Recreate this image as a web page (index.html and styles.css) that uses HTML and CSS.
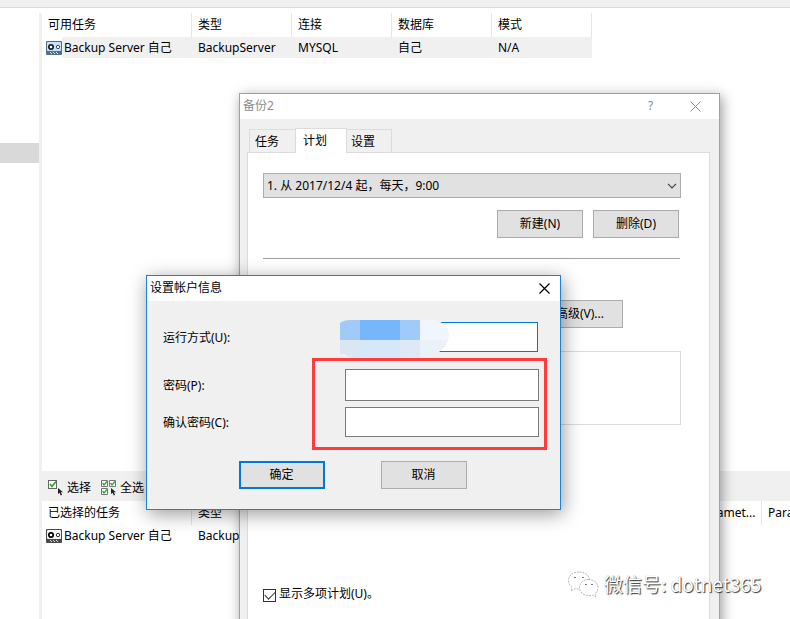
FILE: index.html
```html
<!DOCTYPE html>
<html lang="zh-CN">
<head>
  <meta charset="UTF-8">
  <meta name="viewport" content="width=device-width, initial-scale=1.0">
  <title>备份2 - 设置帐户信息</title>
  <link rel="stylesheet" href="styles.css">
</head>
<body>

  <!-- Main window -->
  <div class="app">
    <div class="topbar"></div>
    <div class="workspace">
      <aside class="sidebar">
        <div class="sidebar-selected"></div>
      </aside>
      <main class="content">
        <section class="available">
          <table class="list">
            <colgroup>
              <col class="col-name"><col class="col"><col class="col"><col class="col"><col class="col">
            </colgroup>
            <thead>
              <tr><th>可用任务</th><th>类型</th><th>连接</th><th>数据库</th><th>模式</th></tr>
            </thead>
            <tbody>
              <tr class="selected">
                <td class="name-cell">
                  <svg class="tape" viewBox="0 0 16 14" width="16" height="14">
                    <rect width="16" height="14" rx="1" fill="#4f6f8f"/>
                    <rect x="1" y="1" width="14" height="9" rx="1" fill="#c9e2fa"/>
                    <circle cx="5" cy="6" r="2.2" fill="#fff" stroke="#14222e" stroke-width="1.7"/>
                    <circle cx="12" cy="6" r="1.7" fill="#fff" stroke="#34536f"/>
                    <path d="M4 11.5h1M7 11.5h1M10 11.5h1M5 12.5h1M8 12.5h1M11 12.5h1" stroke="#dfe8f0"/>
                  </svg>
                  <span>Backup Server 自己</span>
                </td>
                <td>BackupServer</td><td>MYSQL</td><td>自己</td><td>N/A</td>
              </tr>
            </tbody>
          </table>
        </section>

        <div class="toolbar">
          <button class="tool" type="button">
            <svg viewBox="0 0 16 16" width="16" height="16">
              <rect x="0.5" y="0.5" width="8" height="8" fill="#fff" stroke="#666"/>
              <path d="M2 4l2 2.5L8 1.5" fill="none" stroke="#2ea42e" stroke-width="1.7"/>
              <path d="M10 8v6l1.5-1.3 1.3 2.8 1.3-.7-1.3-2.6H15z" fill="#222"/>
            </svg>
            选择
          </button>
          <button class="tool" type="button">
            <svg viewBox="0 0 16 16" width="16" height="16">
              <path d="M.5.5h6v6h-6zM8.5.5h6v6h-6zM.5 8.5h6v6h-6z" fill="#fff" stroke="#777"/>
              <path d="M1.5 3L3 5l3-3.500M9.500 3L11 5l3-3.500M1.500 11L3 13l3-3.500" fill="none" stroke="#2ea42e" stroke-width="1.3"/>
              <path d="M10 8v6l1.5-1.3 1.3 2.8 1.3-.7-1.3-2.6H15z" fill="#222"/>
            </svg>
            全选
          </button>
        </div>

        <section class="chosen">
          <table class="list">
            <colgroup>
              <col class="col-name"><col class="col"><col class="col"><col class="col"><col class="col"><col class="col"><col class="col-short"><col class="col">
            </colgroup>
            <thead>
              <tr><th>已选择的任务</th><th>类型</th><th></th><th></th><th></th><th></th><th>Paramet...</th><th>Para</th></tr>
            </thead>
            <tbody>
              <tr>
                <td class="name-cell">
                  <svg class="tape" viewBox="0 0 16 14" width="16" height="14">
                    <rect width="16" height="14" rx="1" fill="#4a4a4a"/>
                    <rect x="1" y="1" width="14" height="9" rx="1" fill="#f4f4f4"/>
                    <circle cx="5" cy="6" r="2.2" fill="#fff" stroke="#000" stroke-width="1.7"/>
                    <circle cx="12" cy="6" r="1.7" fill="#fff" stroke="#333"/>
                    <path d="M4 11.5h1M7 11.5h1M10 11.5h1M5 12.5h1M8 12.5h1M11 12.5h1" stroke="#ddd"/>
                  </svg>
                  <span>Backup Server 自己</span>
                </td>
                <td>Backup</td><td></td><td></td><td></td><td></td><td></td><td></td>
              </tr>
            </tbody>
          </table>
        </section>
      </main>
    </div>
  </div>

  <!-- Backup job window -->
  <div class="window job-window">
    <div class="titlebar">
      <span class="title">备份2</span>
      <button class="title-button" type="button" aria-label="帮助">?</button>
      <button class="title-button" type="button" aria-label="关闭">
        <svg viewBox="0 0 11 11" width="11" height="11"><path d="M.5.5l10 10M10.5.5l-10 10" stroke="currentColor"/></svg>
      </button>
    </div>
    <div class="job-body">
      <div class="tabs" role="tablist">
        <button class="tab" type="button" role="tab">任务</button>
        <button class="tab active" type="button" role="tab" aria-selected="true">计划</button>
        <button class="tab" type="button" role="tab">设置</button>
      </div>
      <div class="panel" role="tabpanel">
        <div class="schedule">
          <select aria-label="计划">
            <option>1. 从 2017/12/4 起，每天，9:00</option>
          </select>
          <svg viewBox="0 0 10 6" width="10" height="6"><path d="M1 .8l4 4 4-4" fill="none" stroke="#444" stroke-width="1.2"/></svg>
        </div>
        <div class="schedule-actions">
          <button class="btn" type="button">新建(N)</button>
          <button class="btn" type="button">删除(D)</button>
        </div>
        <hr>
        <div class="advanced">
          <button class="btn" type="button">高级(V)...</button>
        </div>
        <div class="summary"></div>
        <label class="check">
          <input type="checkbox" checked>
          显示多项计划(U)。
        </label>
      </div>
    </div>
  </div>

  <!-- Account dialog -->
  <form class="window account-window">
    <div class="titlebar">
      <span class="title">设置帐户信息</span>
      <button class="title-button" type="button" aria-label="关闭">
        <svg viewBox="0 0 11 11" width="11" height="11"><path d="M.5.5l10 10M10.5.5l-10 10" stroke="currentColor" stroke-width="1.2"/></svg>
      </button>
    </div>
    <div class="fields">
      <div class="field">
        <label for="run-as">运行方式(U):</label>
        <div class="run-as">
          <input class="focused" id="run-as" type="text">
          <svg class="mosaic" viewBox="0 0 109 38" width="109" height="38">
            <clipPath id="smudge"><path d="M0 3Q4 0 10 0H96Q109 5 109 15Q108 26 99 32Q88 38 70 38H12Q8 38 5 34H0z"/></clipPath>
            <g clip-path="url(#smudge)" shape-rendering="crispEdges">
              <rect width="20" height="20" fill="#a1cbf6"/>
              <rect x="20" width="40" height="20" fill="#76b7fb"/>
              <rect x="60" width="20" height="20" fill="#a0cafa"/>
              <rect x="80" width="29" height="20" fill="#f0f5fe"/>
              <rect y="20" width="20" height="18" fill="#dae7f3"/>
              <rect x="20" y="20" width="40" height="18" fill="#d6e7f7"/>
              <rect x="60" y="20" width="20" height="18" fill="#dfe9f6"/>
              <rect x="80" y="20" width="29" height="18" fill="#ebf1f9"/>
            </g>
          </svg>
        </div>
      </div>
      <div class="passwords">
        <div class="field">
          <label for="password">密码(P):</label>
          <input id="password" type="password">
        </div>
        <div class="field">
          <label for="confirm">确认密码(C):</label>
          <input id="confirm" type="password">
        </div>
        <div class="highlight"></div>
      </div>
    </div>
    <div class="dialog-actions">
      <button class="btn default" type="submit">确定</button>
      <button class="btn" type="button">取消</button>
    </div>
  </form>

  <div class="watermark">
    <svg viewBox="0 0 32 28" width="32" height="28">
      <g fill="#fff" stroke="#999" stroke-width="0.7" stroke-dasharray="2 1">
        <path d="M12 2C6 2 1.500 5.500 1.500 10.500c0 3 1.500 5 3.500 6.500l-1 4 4.500-2.500c1.200.4 2.300.5 3.500.5 6 0 10.500-3.500 10.500-8.500S18 2 12 2z"/>
        <path d="M21.500 9.500C16.500 9.500 12.500 13 12.500 17.500s4 8 9 8c1.300 0 2.500-.2 3.500-.5l4 2-1-3.500c2-1.500 3-3.500 3-6 0-4.500-4-8-9.500-8z"/>
      </g>
      <path d="M7 7.500h2M15 7.500h2M18 14.500h2M24 14.500h2" stroke="#777" stroke-width="1.2"/>
    </svg>
    <span>微信号: dotnet365</span>
  </div>

</body>
</html>
```
FILE: styles.css
```css
* {
  box-sizing: border-box;
}

body {
  margin: 0;
  height: 100vh;
  overflow: hidden;
  position: relative;
  background: #fff;
  color: #000;
  font-family: "Noto Sans", "Noto Sans CJK SC", sans-serif;
  font-size: 12px;
  line-height: 16px;
}

button,
input,
select {
  font: inherit;
  color: inherit;
}

svg {
  display: block;
  flex: none;
}

/* Main window */
.app {
  height: 100%;
  display: flex;
  flex-direction: column;
}

.topbar {
  height: 8px;
  background: #f0f0f0;
  border-bottom: 1px solid #dadada;
}

.workspace {
  flex: 1;
  display: flex;
  margin-top: 5px;
  min-height: 0;
}

.sidebar {
  width: 42px;
  flex: none;
  border-right: 3px solid #f0f0f0;
  padding-top: 130px;
}

.sidebar-selected {
  height: 20px;
  background: #d9d9d9;
}

.content {
  flex: 1;
  min-width: 0;
  display: flex;
  flex-direction: column;
}

.available {
  flex: 1;
}

.chosen {
  height: 118px;
  overflow: hidden;
}

.list {
  table-layout: fixed;
  border-collapse: separate;
  border-spacing: 0;
  width: 0;
  white-space: nowrap;
}

.col-name {
  width: 150px;
}

.col {
  width: 100px;
}

.col-short {
  width: 70px;
}

.list th {
  height: 24px;
  padding: 0 0 0 6px;
  border-right: 1px solid #e5e5e5;
  font-weight: normal;
  text-align: left;
}

.list td {
  height: 21px;
  padding: 0 0 0 6px;
}

.list .name-cell {
  display: flex;
  align-items: center;
  padding-left: 4px;
}

.name-cell span {
  flex: 1;
  padding-left: 2px;
  line-height: 21px;
}

.selected td,
.selected .name-cell span {
  background: #f0f0f0;
}

.selected .name-cell {
  background: none;
}

.toolbar {
  height: 30px;
  display: flex;
  align-items: center;
  gap: 10px;
  padding: 3px 0 0 6px;
  background: #f0f0f0;
}

.tool {
  display: flex;
  align-items: center;
  gap: 3px;
  padding: 0;
  border: 0;
  background: none;
}

/* Windows */
.window {
  position: absolute;
  display: flex;
  flex-direction: column;
  background: #f0f0f0;
}

.titlebar {
  height: 25px;
  flex: none;
  display: flex;
  align-items: center;
  padding: 0 1px 1px 3px;
  background: #fff;
}

.title {
  flex: 1;
}

.title-button {
  width: 45px;
  height: 24px;
  display: flex;
  align-items: center;
  justify-content: center;
  padding: 0;
  border: 0;
  background: none;
}

.btn {
  width: 86px;
  height: 28px;
  padding: 0;
  border: 1px solid #adadad;
  background: #e1e1e1;
}

.btn.default {
  border: 2px solid #0078d7;
}

.job-window {
  left: 239px;
  top: 93px;
  bottom: -20px;
  width: 481px;
  border: 1px solid #a0a0a0;
  box-shadow: 2px 3px 12px rgba(0, 0, 0, 0.4);
}

.job-window .titlebar {
  color: #8c8c8c;
}

.job-body {
  flex: 1;
  display: flex;
  flex-direction: column;
  padding: 9px 9px 0 7px;
}

.tabs {
  display: flex;
  align-items: flex-end;
  padding-left: 2px;
}

.tab {
  height: 23px;
  padding: 1px 16px 0 5px;
  border: 1px solid #dcdcdc;
  border-bottom: 0;
  background: #f0f0f0;
  text-align: left;
}

.tab + .tab {
  margin-left: -1px;
}

.tab:last-child {
  padding-left: 4px;
}

.tab.active {
  position: relative;
  z-index: 1;
  height: 25px;
  margin-bottom: -1px;
  padding: 0 19px 1px 7px;
  background: #fff;
}

.panel {
  flex: 1;
  padding: 20px 28px 0 15px;
  border: 1px solid #dcdcdc;
  background: #fff;
}

.schedule {
  display: grid;
  align-items: center;
}

.schedule select,
.schedule svg {
  grid-area: 1 / 1;
}

.schedule select {
  appearance: none;
  width: 100%;
  height: 25px;
  padding: 0 24px 0 3px;
  border: 1px solid #adadad;
  border-radius: 0;
  background: #e1e1e1;
}

.schedule svg {
  justify-self: end;
  margin-right: 4px;
  pointer-events: none;
}

.schedule-actions {
  display: flex;
  justify-content: flex-end;
  gap: 10px;
  margin: 12px 2px 20px 0;
}

hr {
  margin: 0 1px 0 0;
  border: 0;
  border-top: 1px solid #a0a0a0;
}

.advanced {
  display: flex;
  justify-content: flex-end;
  margin: 41px 58px 23px 0;
}

.summary {
  height: 74px;
  border: 1px solid #dcdcdc;
}

.check {
  display: flex;
  align-items: center;
  gap: 3px;
  margin-top: 161px;
}

.check input {
  appearance: none;
  width: 13px;
  height: 13px;
  margin: 2px 0 0;
  border: 1px solid #333;
  background: #fff;
  display: grid;
  place-items: center;
}

.check input:checked::before {
  content: "";
  width: 9px;
  height: 5px;
  margin-bottom: 2px;
  border-left: 1px solid #333;
  border-bottom: 1px solid #333;
  transform: rotate(-45deg);
}

/* Account dialog */
.account-window {
  left: 146px;
  top: 275px;
  width: 415px;
  border: 1px solid #1883d7;
  box-shadow: 2px 4px 18px rgba(0, 0, 0, 0.4);
}

.account-window .title-button {
  width: 30px;
}

.fields {
  padding: 21px 21px 0 16px;
}

.field {
  display: grid;
  grid-template-columns: 1fr 194px;
  align-items: center;
}

.field label {
  padding-top: 2px;
}

.field input {
  width: 100%;
  height: 30px;
  padding: 0 4px;
  border: 1px solid #7a7a7a;
  background: #fff;
}

.field input.focused {
  border-color: #0078d7;
  outline: none;
}

.run-as {
  position: relative;
  margin-right: 1px;
}

.run-as input {
  display: block;
}

.mosaic {
  position: absolute;
  left: -5px;
  top: -2px;
}

.passwords {
  position: relative;
  display: grid;
  gap: 6px;
  margin-top: 17px;
}

.passwords #password {
  height: 32px;
}

/* Red frame drawn over the two password boxes */
.highlight {
  position: absolute;
  top: -11px;
  right: -8px;
  bottom: -13px;
  width: 235px;
  border: 3px solid #ff3b3b;
  pointer-events: none;
}

.dialog-actions {
  display: flex;
  justify-content: center;
  gap: 56px;
  padding: 24px 2px 20px 0;
}

.watermark {
  position: absolute;
  left: 567px;
  bottom: 21px;
  display: flex;
  align-items: center;
  gap: 5px;
  color: #fff;
  font-family: "Noto Sans CJK SC", sans-serif;
  font-size: 19px;
  line-height: 28px;
  text-shadow: 1px 1px 1px #333, 0 0 1px #aaa;
}
```
